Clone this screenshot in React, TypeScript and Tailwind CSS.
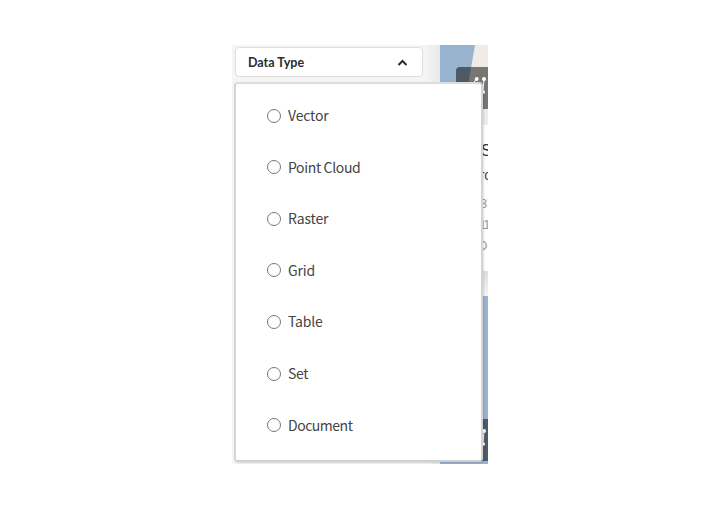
interface DataTypeOption {
  id: string;
  label: string;
  tracking: string;
}

const options: DataTypeOption[] = [
  { id: 'vector', label: 'Vector', tracking: 'tracking-[-0.15px]' },
  { id: 'point-cloud', label: 'Point Cloud', tracking: 'tracking-[-0.36px]' },
  { id: 'raster', label: 'Raster', tracking: 'tracking-[-0.15px]' },
  { id: 'grid', label: 'Grid', tracking: 'tracking-[-0.15px]' },
  { id: 'table', label: 'Table', tracking: 'tracking-[-0.2px]' },
  { id: 'set', label: 'Set', tracking: 'tracking-[-0.3px]' },
  { id: 'document', label: 'Document', tracking: 'tracking-[-0.48px]' },
];

function VectorIcon() {
  return (
    <svg width="32" height="42" viewBox="0 0 32 42" fill="none" stroke="white" strokeWidth="1">
      <path d="M20.5 12L15 19M28 12L27 25" />
      <g fill="white" stroke="none">
        <circle cx="20.7" cy="12" r="2" />
        <circle cx="28" cy="12" r="2" />
        <circle cx="27.3" cy="25" r="1.8" />
      </g>
    </svg>
  );
}

function ResultCards() {
  return (
    <div className="flex h-full w-12 flex-col overflow-hidden">
      {/* Map thumbnail */}
      <div className="relative h-20 shrink-0 bg-[#efece7]">
        <svg width="48" height="80" viewBox="0 0 48 80">
          <path d="M0 0H35L27 46H0Z" fill="#98b3ce" />
        </svg>
        <div className="absolute right-0 top-[22px] h-[42px] w-8 rounded-tl bg-black/50">
          <VectorIcon />
        </div>
      </div>

      {/* Card text */}
      <div className="flex h-[146px] shrink-0 flex-col bg-white pl-[41px] font-['Liberation_Sans',sans-serif] whitespace-nowrap text-[#999]">
        <span className="mt-[15px] h-[22px] text-[16px] leading-[22px] font-medium text-[#333]">S</span>
        <span className="mt-0.5 -ml-px h-[22px] text-sm leading-[22px] tracking-[-0.5px] text-[#444]">rc</span>
        <span className="mt-[7px] -ml-px h-[21px] text-[13px] leading-[21px]">37</span>
        <span className="-ml-0.5 h-[21px] text-[13px] leading-[21px] tracking-[-2px]">11</span>
        <span className="-ml-[3px] h-[21px] text-[13px] leading-[21px]">D</span>
      </div>

      <div className="h-[25px] shrink-0 bg-linear-to-b from-[#dedede] to-[#f4f4f4]" />

      {/* Next map thumbnail */}
      <div className="relative grow bg-[#98b3ce]">
        <div className="absolute right-0 top-[123px] h-[42px] w-8 bg-[#4d5a67]">
          <VectorIcon />
        </div>
      </div>
    </div>
  );
}

export default function App() {
  return (
    <div className="flex h-screen w-full justify-start overflow-hidden bg-white pt-[45px] pl-[232px] font-['Noto_Sans_CJK_SC',sans-serif]">
      <div className="relative flex h-[419px] w-64 justify-between bg-linear-to-r from-[#f5f5f5] from-75% to-[#e6e6e6] to-83%">
        <button className="mt-0.5 ml-[3px] flex h-[30px] w-[188px] shrink-0 items-center justify-between rounded border border-[#dedede] bg-white pr-[14px] pl-3 text-[#2b2b2b]">
          <span className="pt-0.5 font-['Lato',sans-serif] text-[12.5px] leading-none font-bold">Data Type</span>
          <svg width="11" height="11" viewBox="0 0 11 11" fill="none" stroke="currentColor" strokeWidth="2">
            <path d="M1.5 8L5.5 4L9.5 8" />
          </svg>
        </button>

        <ResultCards />

        {/* Dropdown */}
        <ul className="absolute top-[37px] left-0.5 flex h-[380px] w-[249px] flex-col rounded border-2 border-t-[#dcdcdc] border-r-[#d4d4d4] border-b-[#d0d0d0] border-l-[#d6d6d6] bg-white pt-[5.5px] pl-[31px] shadow-[1px_1px_2px_rgba(0,0,0,0.12)]">
          {options.map((option) => (
            <li key={option.id} className="flex h-[51.55px] shrink-0 items-center gap-[7px]">
              <span className="mt-px h-[14px] w-[14px] rounded-full border border-[#777]" />
              <span className={`text-sm text-[#444] ${option.tracking}`}>{option.label}</span>
            </li>
          ))}
        </ul>
      </div>
    </div>
  );
}
